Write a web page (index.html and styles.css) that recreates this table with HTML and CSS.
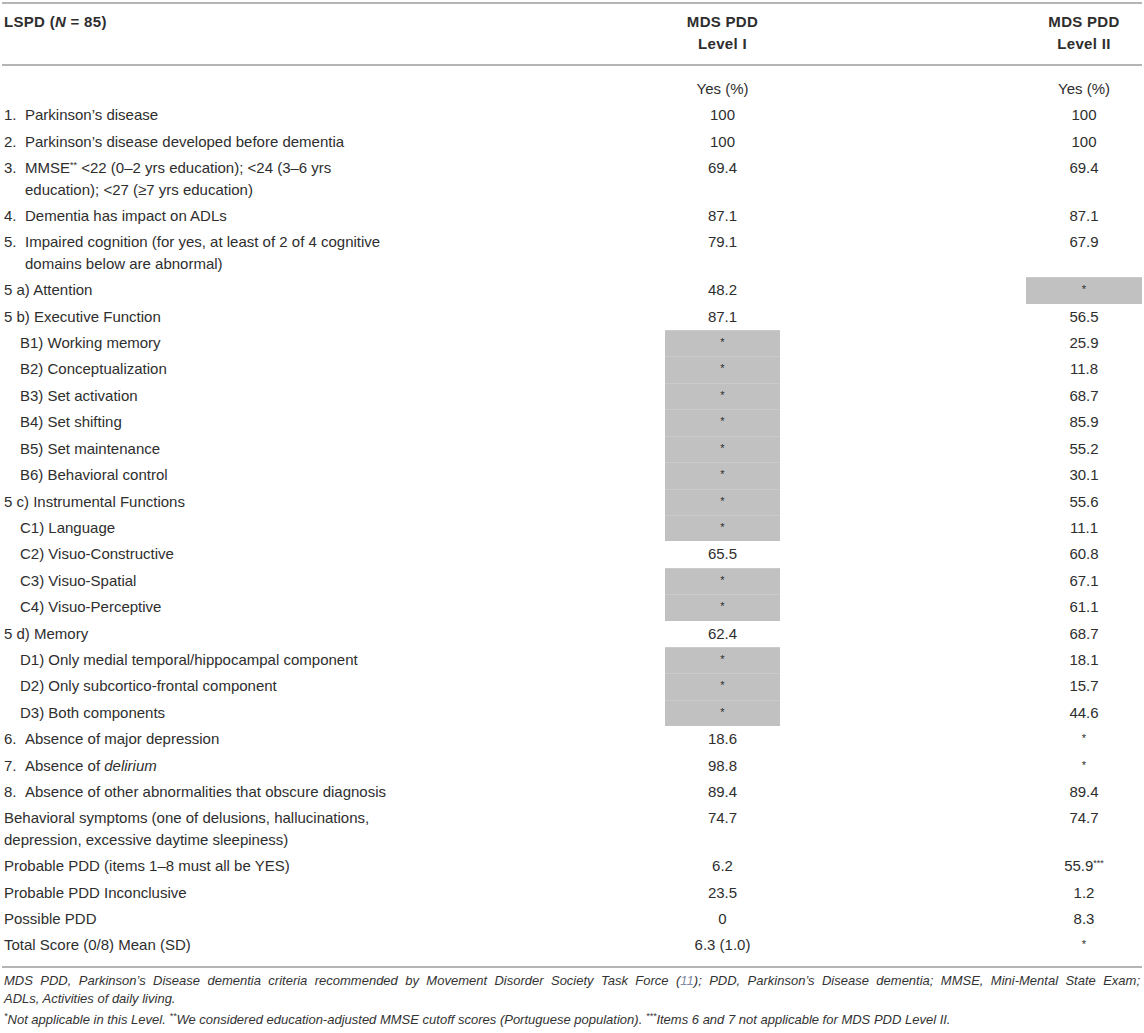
FILE: index.html
```html
<!DOCTYPE html>
<html lang="en">

<head>
    <meta http-equiv="Content-Type" content="text/html;charset=UTF-8">
    <title>MDS PDD criteria</title>
    <link rel="stylesheet" href="styles.css">
</head>

<body>
    <div class="sheet">
        <table class="pdd">
            <colgroup>
                <col class="c-label">
                <col class="c-one">
                <col class="c-gap">
                <col class="c-two">
            </colgroup>
            <thead>
                <tr>
                    <th class="label">LSPD (<i>N</i> = 85)</th>
                    <th>MDS PDD<br>Level I</th>
                    <th></th>
                    <th>MDS PDD<br>Level II</th>
                </tr>
            </thead>
            <tbody>
                <tr class="first">
                    <td></td><td class="val">Yes (%)</td><td></td><td class="val">Yes (%)</td>
                </tr>
                <tr>
                    <td class="item"><span class="num">1.</span>Parkinson’s disease</td>
                    <td class="val">100</td><td></td><td class="val">100</td>
                </tr>
                <tr>
                    <td class="item"><span class="num">2.</span>Parkinson’s disease developed before dementia</td>
                    <td class="val">100</td><td></td><td class="val">100</td>
                </tr>
                <tr>
                    <td class="item"><span class="num">3.</span>MMSE<sup>**</sup> &lt;22 (0–2 yrs education); &lt;24 (3–6 yrs<br>education); &lt;27 (≥7 yrs education)</td>
                    <td class="val">69.4</td><td></td><td class="val">69.4</td>
                </tr>
                <tr>
                    <td class="item"><span class="num">4.</span>Dementia has impact on ADLs</td>
                    <td class="val">87.1</td><td></td><td class="val">87.1</td>
                </tr>
                <tr>
                    <td class="item"><span class="num">5.</span>Impaired cognition (for yes, at least of 2 of 4 cognitive<br>domains below are abnormal)</td>
                    <td class="val">79.1</td><td></td><td class="val">67.9</td>
                </tr>
                <tr>
                    <td class="label">5 a) Attention</td>
                    <td class="val">48.2</td><td></td><td class="val na">*</td>
                </tr>
                <tr>
                    <td class="label">5 b) Executive Function</td>
                    <td class="val">87.1</td><td></td><td class="val">56.5</td>
                </tr>
                <tr>
                    <td class="label sub">B1) Working memory</td>
                    <td class="val na">*</td><td></td><td class="val">25.9</td>
                </tr>
                <tr>
                    <td class="label sub">B2) Conceptualization</td>
                    <td class="val na">*</td><td></td><td class="val">11.8</td>
                </tr>
                <tr>
                    <td class="label sub">B3) Set activation</td>
                    <td class="val na">*</td><td></td><td class="val">68.7</td>
                </tr>
                <tr>
                    <td class="label sub">B4) Set shifting</td>
                    <td class="val na">*</td><td></td><td class="val">85.9</td>
                </tr>
                <tr>
                    <td class="label sub">B5) Set maintenance</td>
                    <td class="val na">*</td><td></td><td class="val">55.2</td>
                </tr>
                <tr>
                    <td class="label sub">B6) Behavioral control</td>
                    <td class="val na">*</td><td></td><td class="val">30.1</td>
                </tr>
                <tr>
                    <td class="label">5 c) Instrumental Functions</td>
                    <td class="val na">*</td><td></td><td class="val">55.6</td>
                </tr>
                <tr>
                    <td class="label sub">C1) Language</td>
                    <td class="val na">*</td><td></td><td class="val">11.1</td>
                </tr>
                <tr>
                    <td class="label sub">C2) Visuo-Constructive</td>
                    <td class="val">65.5</td><td></td><td class="val">60.8</td>
                </tr>
                <tr>
                    <td class="label sub">C3) Visuo-Spatial</td>
                    <td class="val na">*</td><td></td><td class="val">67.1</td>
                </tr>
                <tr>
                    <td class="label sub">C4) Visuo-Perceptive</td>
                    <td class="val na">*</td><td></td><td class="val">61.1</td>
                </tr>
                <tr>
                    <td class="label">5 d) Memory</td>
                    <td class="val">62.4</td><td></td><td class="val">68.7</td>
                </tr>
                <tr>
                    <td class="label sub">D1) Only medial temporal/hippocampal component</td>
                    <td class="val na">*</td><td></td><td class="val">18.1</td>
                </tr>
                <tr>
                    <td class="label sub">D2) Only subcortico-frontal component</td>
                    <td class="val na">*</td><td></td><td class="val">15.7</td>
                </tr>
                <tr>
                    <td class="label sub">D3) Both components</td>
                    <td class="val na">*</td><td></td><td class="val">44.6</td>
                </tr>
                <tr>
                    <td class="item"><span class="num">6.</span>Absence of major depression</td>
                    <td class="val">18.6</td><td></td><td class="val star">*</td>
                </tr>
                <tr>
                    <td class="item"><span class="num">7.</span>Absence of <i>delirium</i></td>
                    <td class="val">98.8</td><td></td><td class="val star">*</td>
                </tr>
                <tr>
                    <td class="item"><span class="num">8.</span>Absence of other abnormalities that obscure diagnosis</td>
                    <td class="val">89.4</td><td></td><td class="val">89.4</td>
                </tr>
                <tr>
                    <td class="label">Behavioral symptoms (one of delusions, hallucinations,<br>depression, excessive daytime sleepiness)</td>
                    <td class="val">74.7</td><td></td><td class="val">74.7</td>
                </tr>
                <tr>
                    <td class="label">Probable PDD (items 1–8 must all be YES)</td>
                    <td class="val">6.2</td><td></td><td class="val">55.9<sup>***</sup></td>
                </tr>
                <tr>
                    <td class="label">Probable PDD Inconclusive</td>
                    <td class="val">23.5</td><td></td><td class="val">1.2</td>
                </tr>
                <tr>
                    <td class="label">Possible PDD</td>
                    <td class="val">0</td><td></td><td class="val">8.3</td>
                </tr>
                <tr class="last">
                    <td class="label">Total Score (0/8) Mean (SD)</td>
                    <td class="val">6.3 (1.0)</td><td></td><td class="val star">*</td>
                </tr>
            </tbody>
        </table>

        <div class="notes">
            <p>MDS PDD, Parkinson’s Disease dementia criteria recommended by Movement Disorder Society Task Force (<a href="#">11</a>); PDD, Parkinson’s Disease dementia; MMSE, Mini-Mental State Exam; <span class="keep">ADLs, Activities of daily living.</span></p>
            <p><sup>*</sup>Not applicable in this Level. <sup>**</sup>We considered education-adjusted MMSE cutoff scores (Portuguese population). <sup>***</sup>Items 6 and 7 not applicable for MDS PDD Level II.</p>
        </div>
    </div>
</body>

</html>
```

FILE: styles.css
```css
* {
    margin: 0;
    padding: 0;
}

body {
    width: 1144px;
    color: #2e2e2e;
    font-family: "Liberation Sans", Arial, Helvetica, sans-serif;
    font-size: 15px;
    background-color: #fff;
}

.sheet {
    padding: 2px 2px 0;
}

/* table */
.pdd {
    width: 1140px;
    table-layout: fixed;
    border-collapse: collapse;
    border-top: 2px solid #b4b4b4;
    border-bottom: 2px solid #b4b4b4;
}

.c-label {
    width: 663px;
}

.c-one {
    width: 115px;
}

.c-gap {
    width: 246px;
}

.c-two {
    width: 116px;
}

.pdd th {
    padding: 7px 0 9px;
    line-height: 22px;
    font-weight: bold;
    letter-spacing: .3px;
    text-align: center;
    vertical-align: top;
    border-bottom: 2px solid #b4b4b4;
}

.pdd th.label {
    text-align: left;
    padding-left: 2px;
}

.pdd td {
    padding: 2px 0 3px;
    line-height: 21.4px;
    vertical-align: top;
}

.pdd tr.first td {
    padding-top: 12px;
}

.pdd tr.last td {
    padding-bottom: 10px;
}

.label {
    padding-left: 2px !important;
}

.label.sub {
    padding-left: 18px !important;
}

.item {
    padding-left: 23px !important;
    text-indent: -21px;
}

.item .num {
    display: inline-block;
    width: 21px;
    text-indent: 0;
}

.val {
    text-align: center;
}

.na {
    background-color: #c1c1c1;
    box-shadow: inset 0 1px 0 #cbcbcb;
    font-size: 11px;
}

.star {
    font-size: 11px;
}

sup {
    font-size: 9px;
    line-height: 0;
    vertical-align: 5px;
}

/* footnotes */
.notes {
    padding: 4px 2px 0;
    font-style: italic;
    font-size: 13px;
    line-height: 18px;
    color: #333;
    text-align: justify;
}

.notes p + p {
    margin-top: 3px;
}

.notes .keep {
    white-space: nowrap;
}

.notes a {
    color: #7f8aa3;
    text-decoration: none;
}
```
